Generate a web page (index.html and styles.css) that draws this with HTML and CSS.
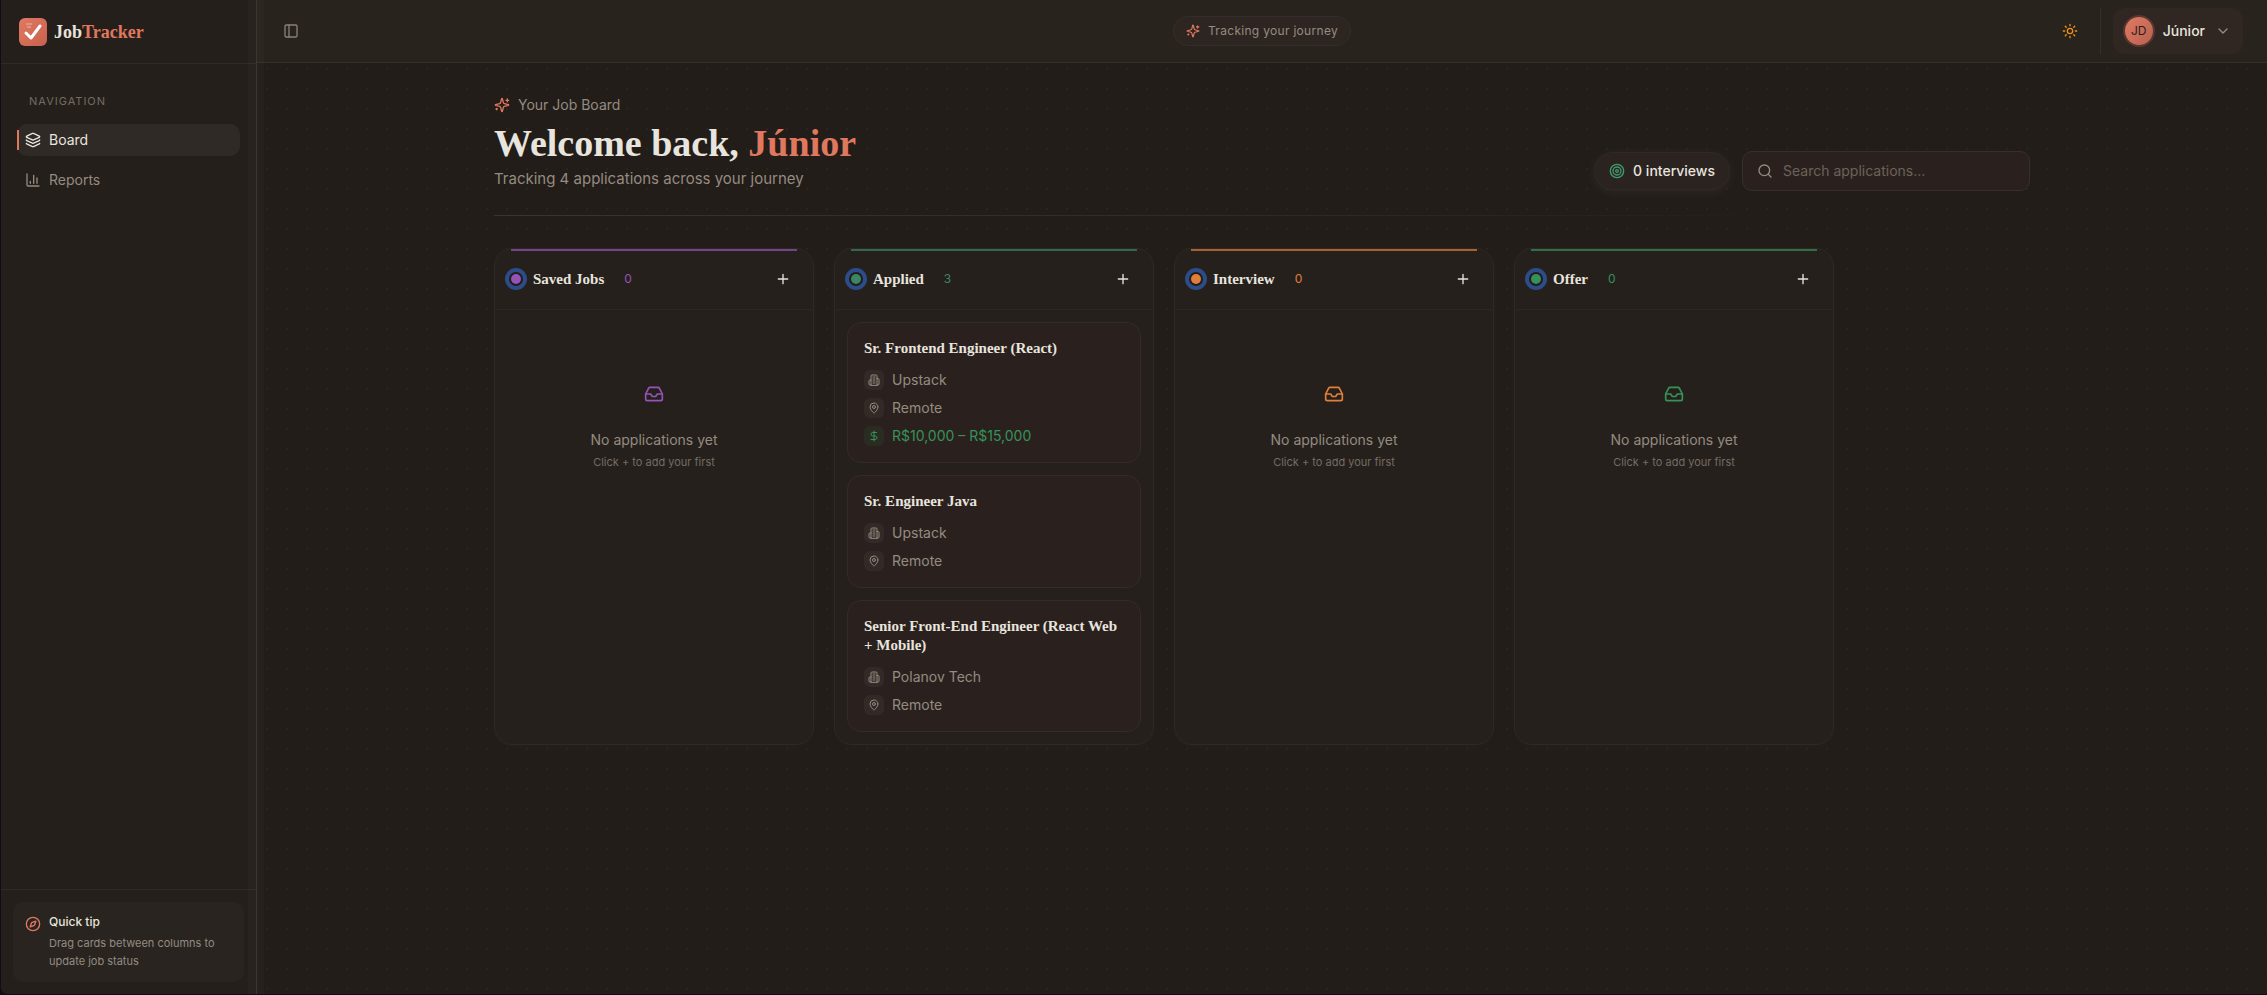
FILE: index.html
```
<!DOCTYPE html>
<html lang="en">
<head>
  <meta charset="UTF-8" />
  <title>JobTracker</title>
  <meta name="viewport" content="width=device-width, initial-scale=1.0" />
  <link rel="stylesheet" href="styles.css">
</head>
<body>
  <!-- icon set -->
  <svg class="sprite" aria-hidden="true">
    <symbol id="i-sparkles" viewBox="0 0 24 24"><path d="M9.937 15.5A2 2 0 0 0 8.5 14.063l-6.135-1.582a.5.5 0 0 1 0-.962L8.5 9.936A2 2 0 0 0 9.937 8.5l1.582-6.135a.5.5 0 0 1 .963 0L14.063 8.5A2 2 0 0 0 15.5 9.937l6.135 1.581a.5.5 0 0 1 0 .964L15.5 14.063a2 2 0 0 0-1.437 1.437l-1.582 6.135a.5.5 0 0 1-.963 0z"/><path d="M20 3v4M22 5h-4M4 17v2M5 18H3"/></symbol>
    <symbol id="i-layers" viewBox="0 0 24 24"><path d="M12.83 2.18a2 2 0 0 0-1.66 0L2.6 6.08a1 1 0 0 0 0 1.83l8.58 3.91a2 2 0 0 0 1.66 0l8.58-3.9a1 1 0 0 0 0-1.83Z"/><path d="M2 12a1 1 0 0 0 .58.91l8.6 3.91a2 2 0 0 0 1.65 0l8.58-3.9A1 1 0 0 0 22 12"/><path d="M2 17a1 1 0 0 0 .58.91l8.6 3.91a2 2 0 0 0 1.65 0l8.58-3.9A1 1 0 0 0 22 17"/></symbol>
    <symbol id="i-chart" viewBox="0 0 24 24"><path d="M3 3v16a2 2 0 0 0 2 2h16M18 17V9M13 17V5M8 17v-3"/></symbol>
    <symbol id="i-panel" viewBox="0 0 24 24"><rect x="3" y="3" width="18" height="18" rx="2"/><path d="M9 3v18"/></symbol>
    <symbol id="i-sun" viewBox="0 0 24 24"><circle cx="12" cy="12" r="4"/><path d="M12 2v2M12 20v2M4.93 4.93l1.41 1.41M17.66 17.66l1.41 1.41M2 12h2M20 12h2M6.34 17.66l-1.41 1.41M19.07 4.93l-1.41 1.41"/></symbol>
    <symbol id="i-chevron" viewBox="0 0 24 24"><path d="m6 9 6 6 6-6"/></symbol>
    <symbol id="i-target" viewBox="0 0 24 24"><circle cx="12" cy="12" r="10"/><circle cx="12" cy="12" r="6"/><circle cx="12" cy="12" r="2"/></symbol>
    <symbol id="i-search" viewBox="0 0 24 24"><circle cx="11" cy="11" r="8"/><path d="m21 21-4.3-4.3"/></symbol>
    <symbol id="i-plus" viewBox="0 0 24 24"><path d="M5 12h14M12 5v14"/></symbol>
    <symbol id="i-inbox" viewBox="0 0 24 24"><path d="M22 12h-6l-2 3h-4l-2-3H2"/><path d="M5.45 5.11 2 12v6a2 2 0 0 0 2 2h16a2 2 0 0 0 2-2v-6l-3.45-6.89A2 2 0 0 0 16.76 4H7.24a2 2 0 0 0-1.79 1.11z"/></symbol>
    <symbol id="i-building" viewBox="0 0 24 24"><path d="M6 22V4a2 2 0 0 1 2-2h8a2 2 0 0 1 2 2v18Z"/><path d="M6 12H4a2 2 0 0 0-2 2v6a2 2 0 0 0 2 2h2M18 9h2a2 2 0 0 1 2 2v9a2 2 0 0 1-2 2h-2M10 6h4M10 10h4M10 14h4M10 18h4"/></symbol>
    <symbol id="i-pin" viewBox="0 0 24 24"><path d="M20 10c0 4.993-5.539 10.193-7.399 11.799a1 1 0 0 1-1.202 0C9.539 20.193 4 14.993 4 10a8 8 0 0 1 16 0"/><circle cx="12" cy="10" r="3"/></symbol>
    <symbol id="i-dollar" viewBox="0 0 24 24"><path d="M12 2v20M17 5H9.5a3.5 3.5 0 0 0 0 7h5a3.5 3.5 0 0 1 0 7H6"/></symbol>
    <symbol id="i-compass" viewBox="0 0 24 24"><path d="m16.24 7.76-1.804 5.411a2 2 0 0 1-1.265 1.265L7.76 16.24l1.804-5.411a2 2 0 0 1 1.265-1.265z"/><circle cx="12" cy="12" r="10"/></symbol>
  </svg>

  <div class="app">
    <aside class="sidebar">
      <a href="#" class="brand">
        <svg class="logo" viewBox="0 0 28 28" aria-hidden="true">
          <defs>
            <linearGradient id="logoFill" x1="0" y1="0" x2="1" y2="1">
              <stop offset="0" stop-color="#e07a64"/>
              <stop offset="1" stop-color="#c9604d"/>
            </linearGradient>
          </defs>
          <rect width="28" height="28" rx="6" fill="url(#logoFill)"/>
          <path d="M7 6h6M8 9h4" stroke="#f0b5a7" stroke-width="1"/>
          <path d="M7 15l5 5 9-12" fill="none" stroke="#fff" stroke-width="3" stroke-linecap="round" stroke-linejoin="round"/>
        </svg>
        <span class="brand-name">Job<span class="accent">Tracker</span></span>
      </a>
      <nav class="nav">
        <h2 class="nav-label">NAVIGATION</h2>
        <a href="#" class="nav-item active"><svg class="icon"><use href="#i-layers"/></svg>Board</a>
        <a href="#" class="nav-item"><svg class="icon"><use href="#i-chart"/></svg>Reports</a>
      </nav>
      <div class="sidebar-footer">
        <div class="tip">
          <svg class="icon accent"><use href="#i-compass"/></svg>
          <div>
            <p class="tip-title">Quick tip</p>
            <p class="tip-text">Drag cards between columns to update job status</p>
          </div>
        </div>
      </div>
      <div class="rail"></div>
    </aside>

    <div class="main">
      <header class="topbar">
        <div class="topbar-side">
          <button class="icon-btn toggle" aria-label="Toggle sidebar"><svg class="icon"><use href="#i-panel"/></svg></button>
        </div>
        <div class="journey"><svg class="icon small accent"><use href="#i-sparkles"/></svg>Tracking your journey</div>
        <div class="topbar-side right">
          <button class="icon-btn sun" aria-label="Toggle theme"><svg class="icon"><use href="#i-sun"/></svg></button>
          <span class="separator"></span>
          <button class="user">
            <span class="avatar">JD</span>
            <span class="user-name">Júnior</span>
            <svg class="icon chevron"><use href="#i-chevron"/></svg>
          </button>
        </div>
      </header>

      <main class="content">
        <div class="page-head">
          <div>
            <p class="eyebrow"><svg class="icon accent"><use href="#i-sparkles"/></svg>Your Job Board</p>
            <h1>Welcome back, <span class="accent">Júnior</span></h1>
            <p class="subtitle">Tracking 4 applications across your journey</p>
          </div>
          <div class="tools">
            <div class="stat"><svg class="icon"><use href="#i-target"/></svg>0 interviews</div>
            <label class="search">
              <svg class="icon"><use href="#i-search"/></svg>
              <input type="text" placeholder="Search applications..." aria-label="Search applications">
            </label>
          </div>
        </div>

        <div class="board">
          <section class="column saved">
            <header class="column-head">
              <span class="dot"></span><h3>Saved Jobs</h3><span class="count">0</span>
              <button class="add" aria-label="Add to Saved Jobs"><svg class="icon"><use href="#i-plus"/></svg></button>
            </header>
            <div class="column-body">
              <div class="empty">
                <span class="empty-icon"><svg class="icon large"><use href="#i-inbox"/></svg></span>
                <p class="empty-title">No applications yet</p>
                <p class="empty-hint">Click + to add your first</p>
              </div>
            </div>
          </section>

          <section class="column applied">
            <header class="column-head">
              <span class="dot"></span><h3>Applied</h3><span class="count">3</span>
              <button class="add" aria-label="Add to Applied"><svg class="icon"><use href="#i-plus"/></svg></button>
            </header>
            <div class="column-body">
              <article class="card">
                <h4>Sr. Frontend Engineer (React)</h4>
                <ul>
                  <li><span class="chip"><svg class="icon tiny"><use href="#i-building"/></svg></span>Upstack</li>
                  <li><span class="chip"><svg class="icon tiny"><use href="#i-pin"/></svg></span>Remote</li>
                  <li class="salary"><span class="chip"><svg class="icon tiny"><use href="#i-dollar"/></svg></span>R$10,000 – R$15,000</li>
                </ul>
              </article>
              <article class="card">
                <h4>Sr. Engineer Java</h4>
                <ul>
                  <li><span class="chip"><svg class="icon tiny"><use href="#i-building"/></svg></span>Upstack</li>
                  <li><span class="chip"><svg class="icon tiny"><use href="#i-pin"/></svg></span>Remote</li>
                </ul>
              </article>
              <article class="card">
                <h4>Senior Front-End Engineer (React Web + Mobile)</h4>
                <ul>
                  <li><span class="chip"><svg class="icon tiny"><use href="#i-building"/></svg></span>Polanov Tech</li>
                  <li><span class="chip"><svg class="icon tiny"><use href="#i-pin"/></svg></span>Remote</li>
                </ul>
              </article>
            </div>
          </section>

          <section class="column interview">
            <header class="column-head">
              <span class="dot"></span><h3>Interview</h3><span class="count">0</span>
              <button class="add" aria-label="Add to Interview"><svg class="icon"><use href="#i-plus"/></svg></button>
            </header>
            <div class="column-body">
              <div class="empty">
                <span class="empty-icon"><svg class="icon large"><use href="#i-inbox"/></svg></span>
                <p class="empty-title">No applications yet</p>
                <p class="empty-hint">Click + to add your first</p>
              </div>
            </div>
          </section>

          <section class="column offer">
            <header class="column-head">
              <span class="dot"></span><h3>Offer</h3><span class="count">0</span>
              <button class="add" aria-label="Add to Offer"><svg class="icon"><use href="#i-plus"/></svg></button>
            </header>
            <div class="column-body">
              <div class="empty">
                <span class="empty-icon"><svg class="icon large"><use href="#i-inbox"/></svg></span>
                <p class="empty-title">No applications yet</p>
                <p class="empty-hint">Click + to add your first</p>
              </div>
            </div>
          </section>
        </div>
      </main>
    </div>
  </div>
</body>
</html>
```
FILE: styles.css
```
:root {
  --bg: #221d19;
  --panel: #25201c;
  --card: #2a211e;
  --line: #2f2a26;
  --text: #e8e4de;
  --muted: #958b80;
  --accent: #e07860;
  --serif: "Liberation Serif", serif;
}
* {
  box-sizing: border-box;
}
body {
  margin: 0;
  background: #100c1a;
  color: var(--text);
  font: 14px/20px Inter, sans-serif;
}
h1, h2, h3, h4, p, ul {
  margin: 0;
  padding: 0;
}
a {
  color: inherit;
  text-decoration: none;
}
button, input {
  font: inherit;
  color: inherit;
  border: none;
  background: none;
  padding: 0;
}
button {
  cursor: pointer;
}
.sprite {
  display: none;
}
.icon {
  width: 16px;
  height: 16px;
  flex: none;
  fill: none;
  stroke: currentColor;
  stroke-width: 2;
  stroke-linecap: round;
  stroke-linejoin: round;
}
.icon.small {
  width: 14px;
  height: 14px;
}
.icon.tiny {
  width: 12px;
  height: 12px;
}
.icon.large {
  width: 20px;
  height: 20px;
}
.accent {
  color: var(--accent);
}
.app {
  display: flex;
  min-height: 100vh;
  padding: 0 0 1px 1px;
}

/* sidebar */
.sidebar {
  position: relative;
  display: flex;
  flex-direction: column;
  width: 256px;
  flex: none;
  background: #241f1b;
  border-right: 1px solid #38332f;
  border-bottom-left-radius: 6px;
}
.rail {
  position: absolute;
  top: 0;
  bottom: 0;
  right: -8px;
  width: 16px;
  background: rgba(255, 245, 235, 0.02);
}
.brand {
  display: flex;
  align-items: center;
  gap: 7px;
  height: 64px;
  padding: 0 18px;
  border-bottom: 1px solid var(--line);
}
.logo {
  width: 28px;
  height: 28px;
}
.brand-name {
  font: bold 18px/24px var(--serif);
}
.nav {
  display: flex;
  flex-direction: column;
  gap: 8px;
  flex: 1;
  padding: 28px 16px;
}
.nav-label {
  padding: 0 12px;
  margin-bottom: 6px;
  font-size: 11px;
  line-height: 18px;
  font-weight: 400;
  letter-spacing: 1px;
  color: #756c63;
}
.nav-item {
  display: flex;
  align-items: center;
  gap: 8px;
  height: 32px;
  padding: 0 8px;
  border-radius: 10px;
  color: var(--muted);
}
.nav-item.active {
  position: relative;
  background: #2f2a25;
  color: var(--text);
}
.nav-item.active::before {
  content: "";
  position: absolute;
  left: 0;
  top: 6px;
  width: 2px;
  height: 20px;
  background: var(--accent);
}
.sidebar-footer {
  padding: 12px;
  border-top: 1px solid var(--line);
}
.tip {
  display: flex;
  gap: 8px;
  padding: 12px;
  border-radius: 10px;
  background: #292420;
}
.tip .icon {
  margin-top: 2px;
}
.tip-title {
  font-size: 12px;
  line-height: 16px;
  font-weight: 500;
}
.tip-text {
  margin-top: 4px;
  font-size: 11px;
  line-height: 18px;
  color: var(--muted);
}

/* main area */
.main {
  flex: 1;
  min-width: 0;
  background-color: var(--bg);
  background-image: radial-gradient(circle at 10px 9px, #292420 1px, transparent 1px);
  background-size: 20px 20px;
}
.topbar {
  display: flex;
  align-items: center;
  justify-content: space-between;
  padding: 8px 24px;
  background: rgba(42, 37, 29, 0.8);
  border-bottom: 1px solid #35302c;
}
.topbar-side {
  display: flex;
  align-items: center;
  gap: 12px;
  flex: 1;
}
.topbar-side.right {
  justify-content: flex-end;
}
.icon-btn {
  display: flex;
  align-items: center;
  justify-content: center;
  width: 36px;
  height: 36px;
}
.toggle {
  width: 20px;
  color: #8a8077;
}
.sun {
  color: #f0901e;
}
.separator {
  width: 1px;
  height: 46px;
  background: #35302b;
}
.journey {
  display: flex;
  align-items: center;
  gap: 8px;
  height: 30px;
  padding: 0 12px;
  border: 1px solid #352d29;
  border-radius: 15px;
  background: #2d2521;
  font-size: 12px;
  letter-spacing: 0.3px;
  color: var(--muted);
}
.user {
  display: flex;
  align-items: center;
  gap: 10px;
  height: 46px;
  padding: 0 12px;
  border-radius: 12px;
  background: #302723;
}
.avatar {
  display: grid;
  place-items: center;
  width: 28px;
  height: 28px;
  border-radius: 50%;
  background: linear-gradient(135deg, #e07a64, #b8614f);
  box-shadow: 0 0 0 2px #58372f;
  color: #2b1d19;
  font-size: 12px;
}
.user-name {
  font-weight: 500;
}
.chevron {
  color: var(--muted);
}

/* page heading */
.content {
  max-width: 1600px;
  margin: 0 auto;
  padding: 32px;
}
.page-head {
  position: relative;
  display: flex;
  align-items: flex-end;
  justify-content: space-between;
  padding-bottom: 25px;
  margin-bottom: 32px;
}
.page-head::after {
  content: "";
  position: absolute;
  left: 0;
  right: 0;
  bottom: 0;
  height: 1px;
  background: linear-gradient(to right, #3a342f, #2f2a26 50%, transparent 85%);
}
.eyebrow {
  display: flex;
  align-items: center;
  gap: 8px;
  color: var(--muted);
}
h1 {
  margin-top: 8px;
  font: bold 38px/40px var(--serif);
}
.subtitle {
  margin-top: 4px;
  font-size: 15px;
  line-height: 24px;
  color: var(--muted);
}
.tools {
  display: flex;
  align-items: center;
  gap: 12px;
}
.stat {
  display: flex;
  align-items: center;
  gap: 8px;
  height: 38px;
  padding: 0 14px;
  border: 1px solid #2f2a27;
  border-radius: 19px;
  background: #2b2320;
  box-shadow: 0 2px 12px rgba(255, 240, 225, 0.06);
  font-weight: 500;
}
.stat .icon {
  color: #3f9b70;
}
.search {
  display: flex;
  align-items: center;
  gap: 10px;
  width: 288px;
  height: 40px;
  padding: 0 14px;
  border: 1px solid #35302c;
  border-radius: 10px;
  background: var(--card);
}
.search .icon {
  color: var(--muted);
}
.search input {
  flex: 1;
  min-width: 0;
  outline: none;
}
.search input::placeholder {
  color: #6b625a;
  opacity: 1;
}

/* board */
.board {
  display: flex;
  gap: 20px;
}
.column {
  position: relative;
  width: 320px;
  border: 1px solid #2e2925;
  border-radius: 18px;
  background: var(--panel);
  box-shadow: 0 2px 16px rgba(255, 240, 225, 0.02);
}
.column::before {
  content: "";
  position: absolute;
  top: 0;
  left: 16px;
  right: 16px;
  height: 2px;
  background: var(--tone);
  opacity: 0.7;
}
.saved { --tone: #9553b8; }
.applied { --tone: #3b8764; }
.interview { --tone: #e07f3b; }
.offer { --tone: #369259; }
.column-head {
  display: flex;
  align-items: center;
  padding: 16px;
  border-bottom: 1px solid #2c2723;
}
.dot {
  width: 10px;
  height: 10px;
  margin-right: 12px;
  border-radius: 50%;
  background: var(--tone);
  box-shadow: 0 0 0 2px var(--bg), 0 0 0 6px #2c4c8a;
}
.column-head h3 {
  font: bold 15px/20px var(--serif);
}
.count {
  margin-left: 20px;
  font-size: 12px;
  color: var(--tone);
}
.add {
  display: grid;
  place-items: center;
  width: 28px;
  height: 28px;
  margin-left: auto;
}
.column-body {
  display: flex;
  flex-direction: column;
  gap: 12px;
  padding: 12px;
}
.empty {
  padding: 48px 0;
  text-align: center;
}
.empty-icon {
  display: grid;
  place-items: center;
  height: 48px;
  margin-bottom: 12px;
  color: var(--tone);
}
.empty-title {
  color: var(--muted);
}
.empty-hint {
  margin-top: 4px;
  font-size: 11px;
  line-height: 16px;
  color: #756c63;
}
.card {
  padding: 16px;
  border: 1px solid #332b28;
  border-radius: 14px;
  background: var(--card);
}
.card h4 {
  margin-bottom: 12px;
  font: bold 15px/19px var(--serif);
}
.card ul {
  display: flex;
  flex-direction: column;
  gap: 8px;
  list-style: none;
}
.card li {
  display: flex;
  align-items: center;
  gap: 8px;
  color: var(--muted);
}
.chip {
  display: grid;
  place-items: center;
  width: 20px;
  height: 20px;
  border-radius: 6px;
  background: #332a27;
}
.card .salary {
  color: #369259;
}
.salary .chip {
  background: #2a2c22;
}
```
